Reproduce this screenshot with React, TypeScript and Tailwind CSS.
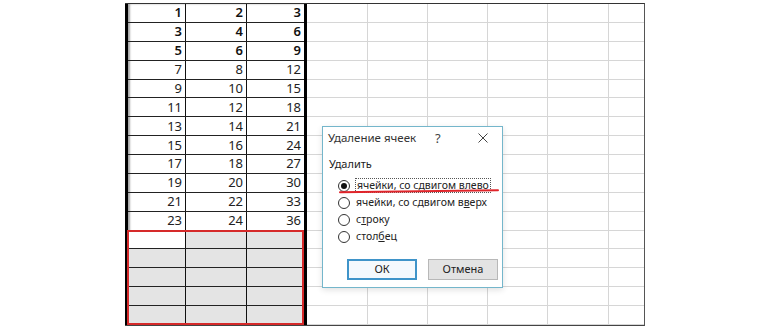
import React from "react";

const data: number[][] = [
  [1, 2, 3],
  [3, 4, 6],
  [5, 6, 9],
  [7, 8, 12],
  [9, 10, 15],
  [11, 12, 18],
  [13, 14, 21],
  [15, 16, 24],
  [17, 18, 27],
  [19, 20, 30],
  [21, 22, 33],
  [23, 24, 36],
];

function Radio({ checked }: { checked?: boolean }) {
  return (
    <span className="flex h-[12px] w-[12px] shrink-0 items-center justify-center rounded-full border border-[#333] bg-white">
      {checked && <span className="h-[6px] w-[6px] rounded-full bg-[#111]" />}
    </span>
  );
}

export default function App() {
  const font = { fontFamily: '"Noto Sans", "Open Sans", sans-serif' };
  return (
    <div className="relative h-[330px] w-[770px] overflow-hidden bg-white pl-[125px] pt-[3px]" style={font}>
      <div className="flex h-[323px] w-[520px] border-b border-r border-t border-b-[#444] border-r-[#555] border-t-[#333]">
        {/* left data table */}
        <div className="grid h-full w-[182px] grid-rows-[repeat(17,minmax(0,1fr))] border-l-[3px] border-r-[3px] border-black shadow-[inset_2px_0_2px_rgba(0,0,0,0.35)]">
          {data.map((r, i) => (
            <div key={i} className="grid grid-cols-[58px_61px_1fr] border-b border-[#222]">
              {r.map((v, j) => (
                <div
                  key={j}
                  className={`flex items-center justify-end pr-[3px] text-[13px] leading-none ${j < 2 ? "border-r-[1.5px] border-[#111]" : ""} ${i < 3 ? "font-semibold text-[#111]" : "text-[#222]"}`}
                >
                  {v}
                </div>
              ))}
            </div>
          ))}
          <div className="relative row-span-5 grid grid-rows-5">
            {[0, 1, 2, 3, 4].map((i) => (
              <div key={i} className={`grid grid-cols-[58px_61px_1fr] ${i < 4 ? "border-b border-[#222]" : ""}`}>
                {[0, 1, 2].map((j) => (
                  <div
                    key={j}
                    className={`${i === 0 && j === 0 ? "bg-white" : "bg-[#e4e4e4]"} ${j < 2 ? "border-r-[1.5px] border-[#111]" : ""}`}
                  />
                ))}
              </div>
            ))}
            <div className="pointer-events-none absolute inset-0 -left-[1px] -top-[1px] border-2 border-[#d62a2a]" />
          </div>
        </div>
        {/* empty grid */}
        <div className="grid h-full flex-1 grid-rows-[repeat(17,minmax(0,1fr))]">
          {Array.from({ length: 17 }).map((_, i) => (
            <div key={i} className="grid grid-cols-[61px_60px_60px_60px_61px_1fr] border-b border-[#d6d6d6]">
              {[0, 1, 2, 3, 4, 5].map((j) => (
                <div key={j} className={j < 5 ? "border-r border-[#d6d6d6]" : ""} />
              ))}
            </div>
          ))}
        </div>
      </div>

      {/* dialog */}
      <div className="absolute left-[322px] top-[126px] flex h-[162px] w-[181px] flex-col border border-[#74b6cb] bg-white text-[10.5px] text-[#222] shadow-[0_2px_6px_rgba(0,0,0,0.12)]">
        <div className="relative flex h-[22px] items-center pl-[5px] text-[11.5px] text-[#333]">
          <span>Удаление ячеек</span>
          <span className="absolute left-[112px] top-[2px] text-[13px] leading-[18px] text-[#444]">?</span>
          <svg className="absolute left-[155px] top-[6px]" width="10" height="10" viewBox="0 0 10 10">
            <path d="M0.5 0.5 L9.5 9.5 M9.5 0.5 L0.5 9.5" stroke="#444" strokeWidth="1" />
          </svg>
        </div>
        <div className="mt-[7px] flex h-[16px] items-center pl-[6px] text-[11px]">Удалить</div>
        <div className="mt-[5px] flex flex-col pl-[15px]">
          <div className="flex h-[17px] items-center gap-[5px]">
            <Radio checked />
            <span className="border border-dotted border-[#555] px-[1px] leading-[13px]">
              ячейки, со сдвигом в<span className="underline">л</span>ево
            </span>
          </div>
          <div className="flex h-[17px] items-center gap-[6px]">
            <Radio />
            <span>
              ячейки, со сдвигом в<span className="underline">в</span>ерх
            </span>
          </div>
          <div className="flex h-[17px] items-center gap-[6px]">
            <Radio />
            <span>
              с<span className="underline">т</span>року
            </span>
          </div>
          <div className="flex h-[17px] items-center gap-[6px]">
            <Radio />
            <span>
              стол<span className="underline">б</span>ец
            </span>
          </div>
        </div>
        <div className="mt-[14px] flex gap-[11px] pl-[24px] text-[11px]">
          <div className="flex h-[21px] w-[70px] items-center justify-center border-2 border-[#3f94c9] bg-[#f4f9fd] text-[#222]">
            ОК
          </div>
          <div className="flex h-[21px] w-[70px] items-center justify-center border border-[#b8b8b8] bg-[#e3e3e3] text-[#222]">
            Отмена
          </div>
        </div>
      </div>

      {/* red hand-drawn underline */}
      <svg className="absolute left-[338px] top-[188px]" width="162" height="6" viewBox="0 0 162 6">
        <path d="M2 4.2 C 40 3.6, 100 2.8, 160 2.2" stroke="#e0242a" strokeWidth="2" fill="none" strokeLinecap="round" />
      </svg>
    </div>
  );
}
